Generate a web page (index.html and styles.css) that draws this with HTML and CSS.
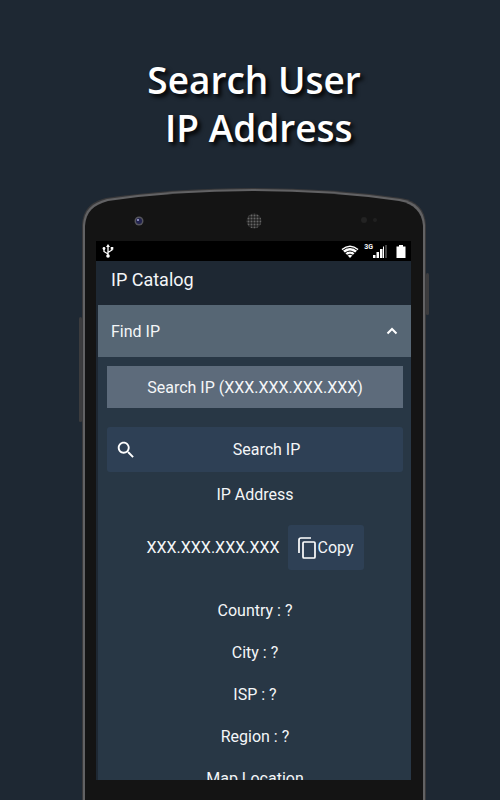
FILE: index.html
```html
<!DOCTYPE html>
<html lang="en">
<head>
    <meta charset="UTF-8">
    <meta name="viewport" content="width=device-width, initial-scale=1.0">
    <link rel="stylesheet" href="styles.css">
    <title>IP Catalog</title>
</head>
<body>
    <h1 class="headline">Search User<br>&nbsp;IP Address</h1>

    <div class="phone">
        <!-- Top of the phone: shell, camera, speaker, sensors -->
        <svg class="phone-top" viewBox="0 0 350 54" aria-hidden="true">
            <defs>
                <pattern id="mesh" width="3" height="3" patternUnits="userSpaceOnUse">
                    <rect width="3" height="3" fill="#222"/>
                    <circle cx="1.5" cy="1.5" r="1" fill="#666"/>
                </pattern>
            </defs>
            <path d="M3 54V38C4 22 12 15 27 11Q95 1 174 1Q253 1 322 11C338 14 346 22 347 38V54Z" fill="#39393b"/>
            <path d="M4 54V38C5 23 13 16 28 12Q96 2 174 2Q252 2 321 12C337 15 345 23 346 38V54Z" fill="#626264"/>
            <path d="M6 54V39C7 25 14 18 29 14Q97 4 174 4Q251 4 320 14C335 17 343 25 344 39V54Z" fill="#141414"/>
            <circle cx="60" cy="34" r="4.500" fill="#55555c"/>
            <circle cx="60" cy="34" r="3" fill="#22234e"/>
            <circle cx="59" cy="33" r="1" fill="#a8aad8"/>
            <circle cx="175" cy="34" r="7.500" fill="url(#mesh)"/>
            <circle cx="285" cy="33" r="3" fill="#232323"/>
            <circle cx="296" cy="33" r="2" fill="#202020"/>
        </svg>

        <div class="phone-body">
            <div class="side-btn volume"></div>
            <div class="side-btn power"></div>

            <div class="screen">
                <div class="statusbar">
                    <svg class="usb" width="12" height="14" viewBox="0 0 12 14" aria-hidden="true">
                        <path d="M6 2V12M6 10L2 7.500V4.500M6 8.500L10 6V4" fill="none" stroke="#fff" stroke-width="1.300"/>
                        <path d="M6 0L8 3H4Z" fill="#fff"/>
                        <circle cx="6" cy="12" r="1.800" fill="#fff"/>
                        <circle cx="2" cy="4.500" r="1.400" fill="#fff"/>
                        <path d="M8.700 3h2.600v2.600H8.700z" fill="#fff"/>
                    </svg>
                    <svg class="wifi" width="18" height="13" viewBox="0 0 18 13" aria-hidden="true">
                        <path d="M0.500 4Q9 -3 17.500 4L9 13Z" fill="#fff"/>
                        <path d="M1.500 5.500Q9 -0.500 16.500 5.500M4 8Q9 4 14 8M6 10.300Q9 8 12 10.300" fill="none" stroke="#000" stroke-width="1"/>
                    </svg>
                    <span class="net">3G</span>
                    <svg class="signal" width="14" height="13" viewBox="0 0 14 13" aria-hidden="true">
                        <path d="M0 10h2.500v3H0zM3.500 7H6v6H3.500zM7 4h2.500v9H7zM10 1.500h1v11.500H10z" fill="#fff"/>
                        <path d="M12 0h2v13H12z" fill="#444"/>
                    </svg>
                    <svg class="battery" width="10" height="13" viewBox="0 0 10 13" aria-hidden="true">
                        <path d="M3 0h4v1.500h2.500V13H0.500V1.500H3z" fill="#fff"/>
                    </svg>
                </div>

                <div class="appbar">IP Catalog</div>

                <div class="content">
                    <button class="section-head" type="button" aria-expanded="true">
                        <span>Find IP</span>
                        <svg width="12" height="8" viewBox="0 0 12 8" aria-hidden="true">
                            <path d="M1.500 6.500L6 2L10.500 6.500" fill="none" stroke="#fff" stroke-width="2"/>
                        </svg>
                    </button>

                    <div class="panel">
                        <input class="ip-input" type="text" placeholder="Search IP (XXX.XXX.XXX.XXX)" aria-label="IP to search">

                        <button class="btn search-btn" type="button">
                            <svg width="22" height="22" viewBox="0 0 24 24" aria-hidden="true">
                                <path d="M15.500 14h-.79l-.28-.27C15.410 12.590 16 11.110 16 9.500 16 5.910 13.090 3 9.500 3S3 5.910 3 9.500 5.910 16 9.500 16c1.610 0 3.090-.59 4.230-1.570l.27.28v.79l5 4.990L20.490 19l-4.990-5zm-6 0C7.010 14 5 11.990 5 9.500S7.010 5 9.500 5 14 7.010 14 9.500 11.990 14 9.500 14z" fill="#fff"/>
                            </svg>
                            <span>Search IP</span>
                        </button>

                        <p class="label">IP Address</p>

                        <div class="result">
                            <span>XXX.XXX.XXX.XXX</span>
                            <button class="btn copy-btn" type="button">
                                <svg width="18" height="22" viewBox="0 0 18 22" aria-hidden="true">
                                    <path d="M1 16V3Q1 1 3 1H13" fill="none" stroke="#fff" stroke-width="1.700"/>
                                    <rect x="5" y="5" width="12" height="16" rx="1" fill="none" stroke="#fff" stroke-width="1.700"/>
                                </svg>
                                <span>Copy</span>
                            </button>
                        </div>

                        <div class="details">
                            <p>Country : ?</p>
                            <p>City : ?</p>
                            <p>ISP : ?</p>
                            <p>Region : ?</p>
                            <p>Map Location</p>
                        </div>
                    </div>
                </div>
            </div>
        </div>
    </div>
</body>
</html>
```

FILE: styles.css
```css
* {
    box-sizing: border-box;
}
body {
    margin: 0;
    height: 100vh;
    padding: 56px 71px 0 79px;
    display: flex;
    flex-direction: column;
    overflow: hidden;
    background-color: #1e2833;
    color: #f4f6f8;
    font-family: Roboto, sans-serif;
    font-size: 16px;
}
p {
    margin: 0;
}
button, input {
    font: inherit;
    color: inherit;
    border: none;
    padding: 0;
    margin: 0;
}
button {
    cursor: pointer;
}
.headline {
    margin: 0 0 35px;
    text-align: center;
    font-family: "Open Sans", sans-serif;
    font-size: 37px;
    font-weight: 600;
    line-height: 48px;
    color: #fff;
    text-shadow: 3px 3px 4px #000;
}

/* Phone */
.phone {
    flex: 1;
    min-height: 0;
    display: flex;
    flex-direction: column;
}
.phone-top {
    display: block;
    width: 100%;
    flex-shrink: 0;
}
.phone-body {
    position: relative;
    flex: 1;
    min-height: 0;
    margin: 0 3px;
    padding: 0 12px 20px 11px;
    display: flex;
    background-color: #141414;
    border: solid #39393b;
    border-width: 0 1px;
    box-shadow: inset 2px 0 #626264, inset -2px 0 #626264;
}
.side-btn {
    position: absolute;
    width: 3px;
    background-color: #3c3c3e;
    border-radius: 2px;
}
.volume {
    left: -4px;
    top: 76px;
    height: 105px;
}
.power {
    right: -4px;
    top: 32px;
    height: 42px;
}

/* Screen */
.screen {
    flex: 1;
    min-width: 0;
    margin: 0 2px 0 2px;
    display: flex;
    flex-direction: column;
    overflow: hidden;
    background-color: #1e2833;
}
.statusbar {
    flex-shrink: 0;
    height: 20px;
    padding: 0 5px 0 6px;
    display: flex;
    align-items: center;
    background-color: #000;
}
.wifi {
    margin-left: auto;
    margin-right: 5px;
}
.net {
    align-self: flex-start;
    margin-top: 2px;
    font-size: 7px;
    line-height: 8px;
    font-weight: 700;
}
.battery {
    margin-left: 9px;
}
.appbar {
    flex-shrink: 0;
    height: 44px;
    padding: 0 15px;
    font-size: 18px;
    line-height: 37px;
}
.content {
    flex: 1;
    min-height: 0;
    margin-left: 2px;
    overflow: hidden;
    background-color: #283745;
}
.section-head {
    width: 100%;
    height: 52px;
    padding: 0 13px;
    display: flex;
    align-items: center;
    justify-content: space-between;
    background-color: #566674;
}
.panel {
    padding: 9px 8px 0 9px;
    text-align: center;
}
.ip-input {
    display: block;
    width: 100%;
    height: 42px;
    margin-bottom: 19px;
    text-align: center;
    background-color: #5d6b7b;
    border-radius: 0;
}
.ip-input::placeholder {
    color: #f4f6f8;
    opacity: 1;
}
.btn {
    height: 45px;
    display: flex;
    align-items: center;
    background-color: #2e4055;
    border-radius: 3px;
}
.search-btn {
    width: 100%;
    padding: 0 23px 0 8px;
}
.search-btn span {
    flex: 1;
    padding-left: 16px;
}
.label {
    line-height: 46px;
    margin-bottom: 7px;
}
.result {
    display: flex;
    align-items: center;
    justify-content: center;
    gap: 8px;
    margin-bottom: 20px;
}
.copy-btn {
    padding: 0 10px;
    gap: 2px;
}
.details p {
    line-height: 42px;
}
```
